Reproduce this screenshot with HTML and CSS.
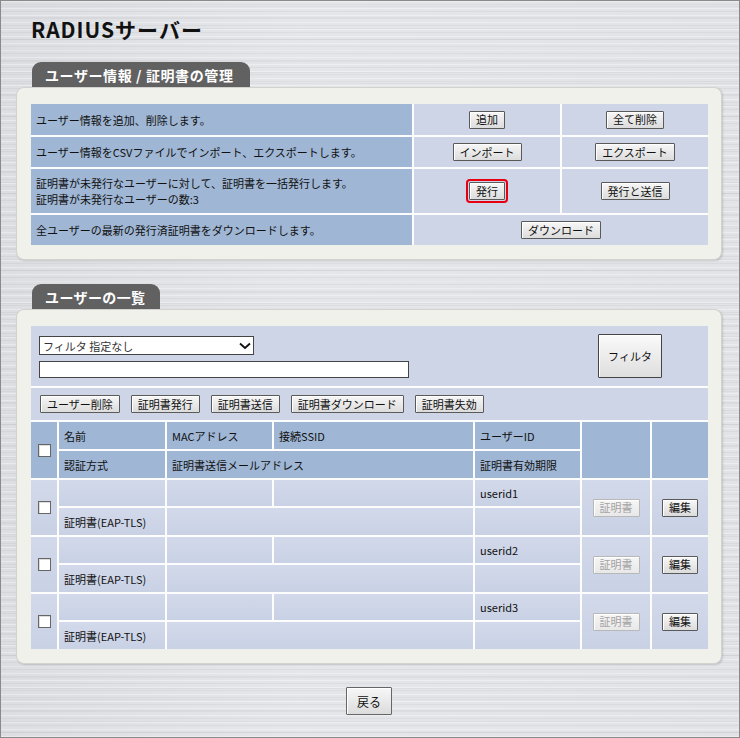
FILE: index.html
```html
<!DOCTYPE html>
<html lang="ja">
<head>
    <meta charset="UTF-8">
    <meta name="viewport" content="width=device-width, initial-scale=1.0">
    <title>RADIUSサーバー</title>
<link rel="stylesheet" href="styles.css">
</head>
<body>
    <div class="page">
        <!-- Título -->
        <h1 class="title">RADIUSサーバー</h1>

        <!-- Gestión de usuarios / certificados -->
        <div class="tab">ユーザー情報 / 証明書の管理</div>
        <div class="panel">
            <div class="manage-grid">
                <div class="desc">ユーザー情報を追加、削除します。</div>
                <div class="act"><button class="btn">追加</button></div>
                <div class="act"><button class="btn">全て削除</button></div>

                <div class="desc">ユーザー情報をCSVファイルでインポート、エクスポートします。</div>
                <div class="act"><button class="btn">インポート</button></div>
                <div class="act"><button class="btn">エクスポート</button></div>

                <div class="desc">証明書が未発行なユーザーに対して、証明書を一括発行します。<br>証明書が未発行なユーザーの数:3</div>
                <div class="act"><button class="btn marked">発行</button></div>
                <div class="act"><button class="btn">発行と送信</button></div>

                <div class="desc">全ユーザーの最新の発行済証明書をダウンロードします。</div>
                <div class="act wide"><button class="btn">ダウンロード</button></div>
            </div>
        </div>

        <!-- Lista de usuarios -->
        <div class="tab tab-list">ユーザーの一覧</div>
        <div class="panel">
            <div class="user-grid">
                <div class="filter-cell">
                    <div class="filter-fields">
                        <div class="select-box">
                            <span>フィルタ 指定なし</span>
                            <svg width="12" height="8" viewBox="0 0 12 8"><path d="M1 1.5 L6 6 L11 1.5" fill="none" stroke="#111" stroke-width="1.8"/></svg>
                        </div>
                        <input class="text-box" type="text">
                    </div>
                    <button class="btn btn-filter">フィルタ</button>
                </div>
                <div class="tool-cell">
                    <button class="btn">ユーザー削除</button>
                    <button class="btn">証明書発行</button>
                    <button class="btn">証明書送信</button>
                    <button class="btn">証明書ダウンロード</button>
                    <button class="btn">証明書失効</button>
                </div>

                <div class="hd chk"><input type="checkbox" class="check"></div>
                <div class="hd">名前</div>
                <div class="hd">MACアドレス</div>
                <div class="hd">接続SSID</div>
                <div class="hd">ユーザーID</div>
                <div class="hd tall"></div>
                <div class="hd tall"></div>
                <div class="hd">認証方式</div>
                <div class="hd span2">証明書送信メールアドレス</div>
                <div class="hd">証明書有効期限</div>

                <div class="cell chk"><input type="checkbox" class="check"></div>
                <div class="cell"></div>
                <div class="cell"></div>
                <div class="cell"></div>
                <div class="cell">userid1</div>
                <div class="cell tall act"><button class="btn" disabled>証明書</button></div>
                <div class="cell tall act"><button class="btn">編集</button></div>
                <div class="cell">証明書(EAP-TLS)</div>
                <div class="cell span2"></div>
                <div class="cell"></div>

                <div class="cell chk"><input type="checkbox" class="check"></div>
                <div class="cell"></div>
                <div class="cell"></div>
                <div class="cell"></div>
                <div class="cell">userid2</div>
                <div class="cell tall act"><button class="btn" disabled>証明書</button></div>
                <div class="cell tall act"><button class="btn">編集</button></div>
                <div class="cell">証明書(EAP-TLS)</div>
                <div class="cell span2"></div>
                <div class="cell"></div>

                <div class="cell chk"><input type="checkbox" class="check"></div>
                <div class="cell"></div>
                <div class="cell"></div>
                <div class="cell"></div>
                <div class="cell">userid3</div>
                <div class="cell tall act"><button class="btn" disabled>証明書</button></div>
                <div class="cell tall act"><button class="btn">編集</button></div>
                <div class="cell">証明書(EAP-TLS)</div>
                <div class="cell span2"></div>
                <div class="cell"></div>
            </div>
        </div>

        <!-- Volver -->
        <div class="back-row"><button class="btn btn-back">戻る</button></div>
    </div>
</body>
</html>
```

FILE: styles.css
```css
/* Estilo global */
* {
    box-sizing: border-box;
    font-family: "Noto Sans CJK JP", "Liberation Sans", sans-serif;
}

body {
    margin: 0;
    background-color: #dfe1e5;
}

/* Fondo metálico con líneas horizontales */
.page {
    min-height: 738px;
    border: 1px solid #8a8a8a;
    padding: 15px 17px 0 15px;
    background:
        repeating-linear-gradient(180deg, rgba(255,255,255,0.35) 0 1px, rgba(0,0,0,0) 1px 3px, rgba(0,0,0,0.04) 3px 4px, rgba(0,0,0,0) 4px 7px),
        repeating-linear-gradient(180deg, rgba(0,0,0,0) 0 5px, rgba(0,0,0,0.035) 5px 6px, rgba(0,0,0,0) 6px 11px),
        linear-gradient(90deg, #dcdee2, #e4e6ea 40%, #e1e3e7);
}

.title {
    margin: 0 0 0 15px;
    font-size: 21px;
    line-height: 26px;
    font-weight: 700;
    letter-spacing: 1px;
    color: #111;
}

/* Pestañas */
.tab {
    width: 218px;
    height: 25px;
    margin: 20px 0 0 16px;
    padding-left: 13px;
    background-color: #616161;
    border-radius: 9px 9px 0 0;
    color: #fff;
    font-size: 14px;
    font-weight: 700;
    letter-spacing: 0.6px;
    line-height: 26px;
}

.tab-list {
    width: 128px;
    margin-top: 24px;
    letter-spacing: 0.4px;
}

/* Paneles */
.panel {
    background-color: #f1f1ec;
    border: 1px solid #d2d2ce;
    border-radius: 8px;
    box-shadow: 1px 1px 2px rgba(0, 0, 0, 0.15);
    padding: 16px 13px 14px 14px;
}

/* Tabla de gestión */
.manage-grid {
    display: grid;
    grid-template-columns: 381px 146px 146px;
    grid-template-rows: 31px 30px 44px 30px;
    gap: 2px;
    background-color: #fdfdfd;
    font-size: 11px;
    color: #111;
}

.desc {
    display: flex;
    align-items: center;
    padding-left: 5px;
    line-height: 16px;
    background-color: #9fb6d4;
}

.act {
    display: flex;
    justify-content: center;
    align-items: center;
    background-color: #cdd5e7;
}

.wide {
    grid-column: span 2;
}

/* Botones */
.btn {
    height: 18px;
    padding: 0 6px;
    font-size: 11px;
    line-height: 15px;
    color: #111;
    background: linear-gradient(#f7f7f7, #dcdcdc);
    border: 1px solid #5a5a5a;
    box-shadow: inset 1px 1px 0 #fff;
    border-radius: 1px;
    cursor: pointer;
}

.btn:disabled {
    color: #a3a3a3;
    border-color: #b8b8b8;
    background: linear-gradient(#f6f6f6, #e8e8e8);
    cursor: default;
}

.marked {
    outline: 2px solid #e60012;
    outline-offset: 1px;
}

/* Lista de usuarios */
.user-grid {
    display: grid;
    grid-template-columns: 26px 106px 105px 199px 105px 68px 56px;
    grid-template-rows: 60px 32px 27px 27px repeat(3, 26px 27px);
    gap: 2px;
    background-color: #fdfdfd;
    font-size: 11px;
    color: #111;
}

.filter-cell {
    grid-column: 1 / -1;
    display: flex;
    align-items: center;
    padding: 0 46px 0 8px;
    background-color: #cdd5e7;
}

.filter-fields {
    display: flex;
    flex-direction: column;
    gap: 6px;
    padding-top: 2px;
}

.select-box {
    width: 215px;
    height: 19px;
    display: flex;
    justify-content: space-between;
    align-items: center;
    padding: 0 2px 0 3px;
    background-color: #fff;
    border: 1px solid #444;
    color: #333;
}

.text-box {
    width: 370px;
    height: 17px;
    margin: 0;
    border: 1px solid #444;
    background-color: #fff;
}

.btn-filter {
    width: 64px;
    height: 44px;
    margin-left: auto;
    border-color: #444;
    background: linear-gradient(#fafafa, #dedede);
}

.tool-cell {
    grid-column: 1 / -1;
    display: flex;
    align-items: center;
    gap: 11px;
    padding-left: 9px;
    background-color: #cdd5e7;
}

.hd {
    display: flex;
    align-items: center;
    padding-left: 5px;
    background-color: #9fb6d4;
}

.cell {
    display: flex;
    align-items: center;
    padding-left: 5px;
    background: linear-gradient(#d2d9ea, #c9d1e5);
}

.cell.act {
    padding-left: 0;
}

.chk {
    grid-row: span 2;
    justify-content: center;
    padding-left: 0;
}

.tall {
    grid-row: span 2;
}

.span2 {
    grid-column: span 2;
}

.check {
    appearance: none;
    width: 13px;
    height: 13px;
    margin: 0;
    background-color: #fff;
    border: 1px solid #666;
    box-shadow: inset 1px 1px 0 #ddd;
}

/* Botón de volver */
.back-row {
    display: flex;
    justify-content: center;
    padding-top: 23px;
}

.btn-back {
    width: 46px;
    height: 28px;
    font-size: 12px;
    border-color: #666;
}
```
